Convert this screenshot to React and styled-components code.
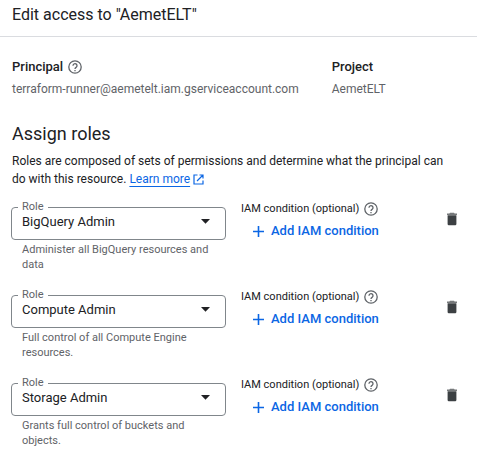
import React, { useId } from "react";
import styled, { createGlobalStyle } from "styled-components";

const color = {
  text: "#202124",
  muted: "#5f6368",
  outline: "#80868b",
  divider: "#dadce0",
  action: "#0b66e4",
};

const displayFont = `"Google Sans", Roboto, sans-serif`;

const GlobalStyle = createGlobalStyle`
  *, *::before, *::after { box-sizing: border-box; }
  body {
    margin: 0;
    background: #fff;
    color: ${color.text};
    font-family: Roboto, sans-serif;
    font-size: 12px;
    line-height: 18px;
  }
`;

const Header = styled.header`
  padding: 3px 12px 9px;
  border-bottom: 1px solid ${color.divider};
`;

const Title = styled.h1`
  margin: 0;
  font: 400 16px/24px ${displayFont};
`;

const Content = styled.main`
  padding: 20px 11px 0;
`;

const Summary = styled.dl`
  display: grid;
  grid-template-columns: 12fr 5fr;
  margin: 0 1px;
`;

const Term = styled.dt`
  display: flex;
  align-items: center;
  gap: 5px;
  height: 20px;
  font: 500 13px/20px ${displayFont};
`;

const Detail = styled.dd`
  margin: 3px 0 0;
  color: ${color.muted};
`;

const Intro = styled.section`
  margin: 24px 1px 19px;
`;

const SectionTitle = styled.h2`
  margin: 0 0 6px;
  font: 400 18px/24px ${displayFont};
`;

const Text = styled.p`
  margin: 0;
  padding-right: 12px;
`;

const Link = styled.a`
  color: ${color.action};
  text-decoration: underline;
  text-underline-offset: 3px;

  svg {
    margin-left: 3px;
    vertical-align: -2px;
  }
`;

const RoleList = styled.ul`
  display: flex;
  flex-direction: column;
  gap: 22px;
  margin: 0;
  padding: 0;
  list-style: none;
`;

const RoleRow = styled.li`
  display: grid;
  grid-template-columns: minmax(0, 1fr) 182px 28px;
  column-gap: 15px;
  align-items: start;
`;

const Outline = styled.div`
  position: relative;
  display: flex;
  align-items: center;
  height: 33px;
  border: 1px solid ${color.outline};
  border-radius: 4px;

  svg {
    position: absolute;
    top: 11px;
    right: 15px;
    pointer-events: none;
  }
`;

const FloatingLabel = styled.label`
  position: absolute;
  top: -8px;
  left: 6px;
  padding: 0 4px;
  background: #fff;
  color: ${color.muted};
  font-size: 11px;
  line-height: 14px;
`;

const Select = styled.select`
  appearance: none;
  width: 100%;
  height: 100%;
  padding: 0 32px 3px 10px;
  border: 0;
  background: transparent;
  color: ${color.text};
  font: 400 13px/18px Roboto, sans-serif;
`;

const Hint = styled.p`
  margin: 2px 11px 0;
  padding-bottom: 1px;
  color: ${color.muted};
  font-size: 11px;
  line-height: 15px;
`;

const Condition = styled.div`
  display: flex;
  flex-direction: column;
  align-items: flex-start;
  margin-top: -6px;
`;

const ConditionLabel = styled.div`
  display: flex;
  align-items: center;
  gap: 5px;
  height: 16px;
  font-size: 11px;
  line-height: 16px;
`;

const AddButton = styled.button`
  display: flex;
  align-items: center;
  gap: 6px;
  margin: 4px 0 0 11px;
  padding: 0;
  border: 0;
  background: none;
  color: ${color.action};
  font: 500 13px/20px ${displayFont};
  cursor: pointer;
`;

const IconButton = styled.button`
  display: flex;
  justify-content: center;
  padding: 5px 0;
  border: 0;
  background: none;
  color: #3c4043;
  cursor: pointer;
`;

function HelpIcon() {
  return (
    <svg width="14" height="14" viewBox="0 0 14 14" fill="none" stroke={color.muted} strokeWidth="1.3" role="img" aria-label="Help">
      <circle cx="7" cy="7" r="6.2" />
      <path d="M5 5.7a2 2 0 1 1 3.2 1.6C7.5 7.8 7 8.1 7 8.9" />
      <path d="M7 9.9v1.3" />
    </svg>
  );
}

function ExternalIcon() {
  return (
    <svg width="11" height="11" viewBox="0 0 11 11" fill="none" stroke="currentColor" strokeWidth="1.2" aria-hidden="true">
      <path d="M4.5 1H1v9h9V6.5M6.5 1H10v3.5M10 1 4 7" />
    </svg>
  );
}

function ArrowIcon() {
  return (
    <svg width="9" height="5" viewBox="0 0 9 5" aria-hidden="true">
      <path d="M0 0h9L4.5 4.7z" fill={color.text} />
    </svg>
  );
}

function PlusIcon() {
  return (
    <svg width="13" height="13" viewBox="0 0 13 13" aria-hidden="true">
      <path d="M6.5 1v11M1 6.5h11" stroke="currentColor" strokeWidth="1.6" />
    </svg>
  );
}

function TrashIcon() {
  return (
    <svg width="12" height="14" viewBox="0 0 12 14" fill="currentColor" aria-hidden="true">
      <path d="M4 .7h4l.6.8H11v1.4H1V1.5h2.4z" opacity=".7" />
      <path d="M1.600 3.300h8.800v8.700q0 1.200-1.200 1.200H2.800q-1.200 0-1.200-1.200z" />
    </svg>
  );
}

const roles = [
  { name: "BigQuery Admin", hint: "Administer all BigQuery resources and data" },
  { name: "Compute Admin", hint: "Full control of all Compute Engine resources." },
  { name: "Storage Admin", hint: "Grants full control of buckets and objects." },
];

function Role({ name, hint }) {
  const id = useId();
  return (
    <RoleRow>
      <div>
        <Outline>
          <FloatingLabel htmlFor={id}>Role</FloatingLabel>
          <Select id={id} defaultValue={name} aria-describedby={`${id}-hint`}>
            {roles.map((role) => (
              <option key={role.name}>{role.name}</option>
            ))}
          </Select>
          <ArrowIcon />
        </Outline>
        <Hint id={`${id}-hint`}>{hint}</Hint>
      </div>
      <Condition>
        <ConditionLabel>
          IAM condition (optional)
          <HelpIcon />
        </ConditionLabel>
        <AddButton type="button">
          <PlusIcon />
          Add IAM condition
        </AddButton>
      </Condition>
      <IconButton type="button" aria-label={`Delete ${name}`}>
        <TrashIcon />
      </IconButton>
    </RoleRow>
  );
}

export default function App() {
  return (
    <>
      <GlobalStyle />
      <Header>
        <Title>Edit access to "AemetELT"</Title>
      </Header>
      <Content>
        <Summary>
          <div>
            <Term>
              Principal
              <HelpIcon />
            </Term>
            <Detail>terraform-runner@aemetelt.iam.gserviceaccount.com</Detail>
          </div>
          <div>
            <Term>Project</Term>
            <Detail>AemetELT</Detail>
          </div>
        </Summary>
        <Intro>
          <SectionTitle>Assign roles</SectionTitle>
          <Text>
            Roles are composed of sets of permissions and determine what the principal can do with this resource.{" "}
            <Link href="#learn-more">
              Learn more
              <ExternalIcon />
            </Link>
          </Text>
        </Intro>
        <RoleList>
          {roles.map((role) => (
            <Role key={role.name} {...role} />
          ))}
        </RoleList>
      </Content>
    </>
  );
}
